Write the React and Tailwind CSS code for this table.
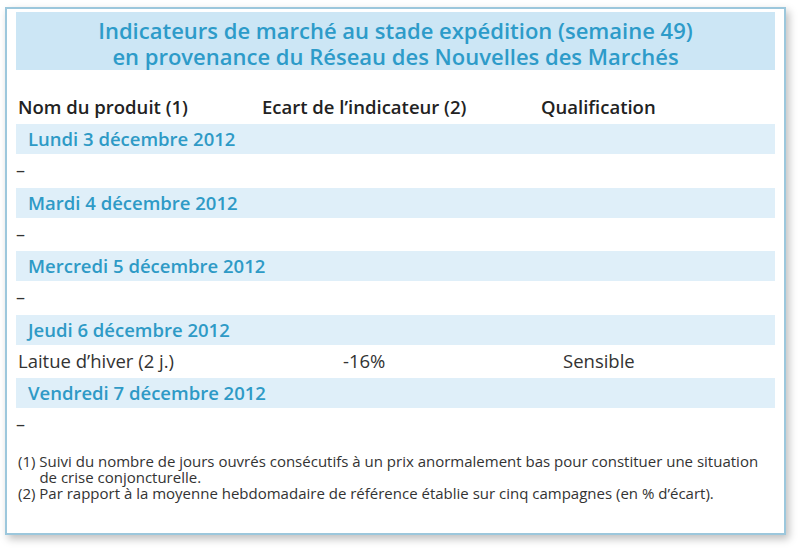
const days = [
  { day: "Lundi 3 décembre 2012", rows: [] },
  { day: "Mardi 4 décembre 2012", rows: [] },
  { day: "Mercredi 5 décembre 2012", rows: [] },
  { day: "Jeudi 6 décembre 2012", rows: [{ name: "Laitue d’hiver (2 j.)", ecart: "-16%", qual: "Sensible" }] },
  { day: "Vendredi 7 décembre 2012", rows: [] },
];

// one text block so the hanging indent stays aligned under "Suivi"
const notes =
  "(1) Suivi du nombre de jours ouvrés consécutifs à un prix anormalement bas pour constituer une situation\n" +
  "\u2002\u2002 \u2006de crise conjoncturelle.\n" +
  "(2) Par rapport à la moyenne hebdomadaire de référence établie sur cinq campagnes (en % d’écart).";

function DayBlock({ day, rows }) {
  return (
    <>
      <div className="flex h-[30px] items-center bg-[#dfeff9] pl-[12px] text-[18.5px] font-semibold text-[#2e9ac6]">
        {day}
      </div>
      {rows.length === 0 ? (
        <div className="flex h-[33.5px] items-center text-[18px] text-[#333]">–</div>
      ) : (
        rows.map((r) => (
          <div key={r.name} className="flex h-[33.5px] items-center text-[18.5px] text-[#333]">
            <span className="w-[327px] pl-[2px]">{r.name}</span>
            <span className="w-[220px]">{r.ecart}</span>
            <span>{r.qual}</span>
          </div>
        ))
      )}
    </>
  );
}

export default function App() {
  return (
    <div className="h-[550px] w-[800px] bg-white pl-[5px] pt-[7px] font-['Open_Sans',sans-serif]">
      <div className="h-[528px] w-[781px] border-2 border-[#9cc7dc] bg-white px-[9px] pt-[3px] shadow-[3px_4px_8px_rgba(0,0,0,0.25)]">
        <div className="flex h-[58px] items-center justify-center bg-[#cce6f5] pt-[3px]">
          <div className="w-[612px] text-center text-[22px] font-semibold leading-[26px] text-[#2d9bc9]">
            Indicateurs de marché au stade expédition (semaine 49) en provenance du Réseau des Nouvelles des Marchés
          </div>
        </div>
        <div className="mt-[20px] flex h-[34px] items-center text-[18.5px] font-semibold text-[#222]">
          <span className="w-[246px] pl-[2px]">Nom du produit (1)</span>
          <span className="w-[279px]">Ecart de l’indicateur (2)</span>
          <span>Qualification</span>
        </div>
        {days.map((d) => (
          <DayBlock key={d.day} day={d.day} rows={d.rows} />
        ))}
        <div className="mt-[11px] whitespace-pre pl-[2px] text-[15px] leading-[16px] text-[#333]">{notes}</div>
      </div>
    </div>
  );
}
